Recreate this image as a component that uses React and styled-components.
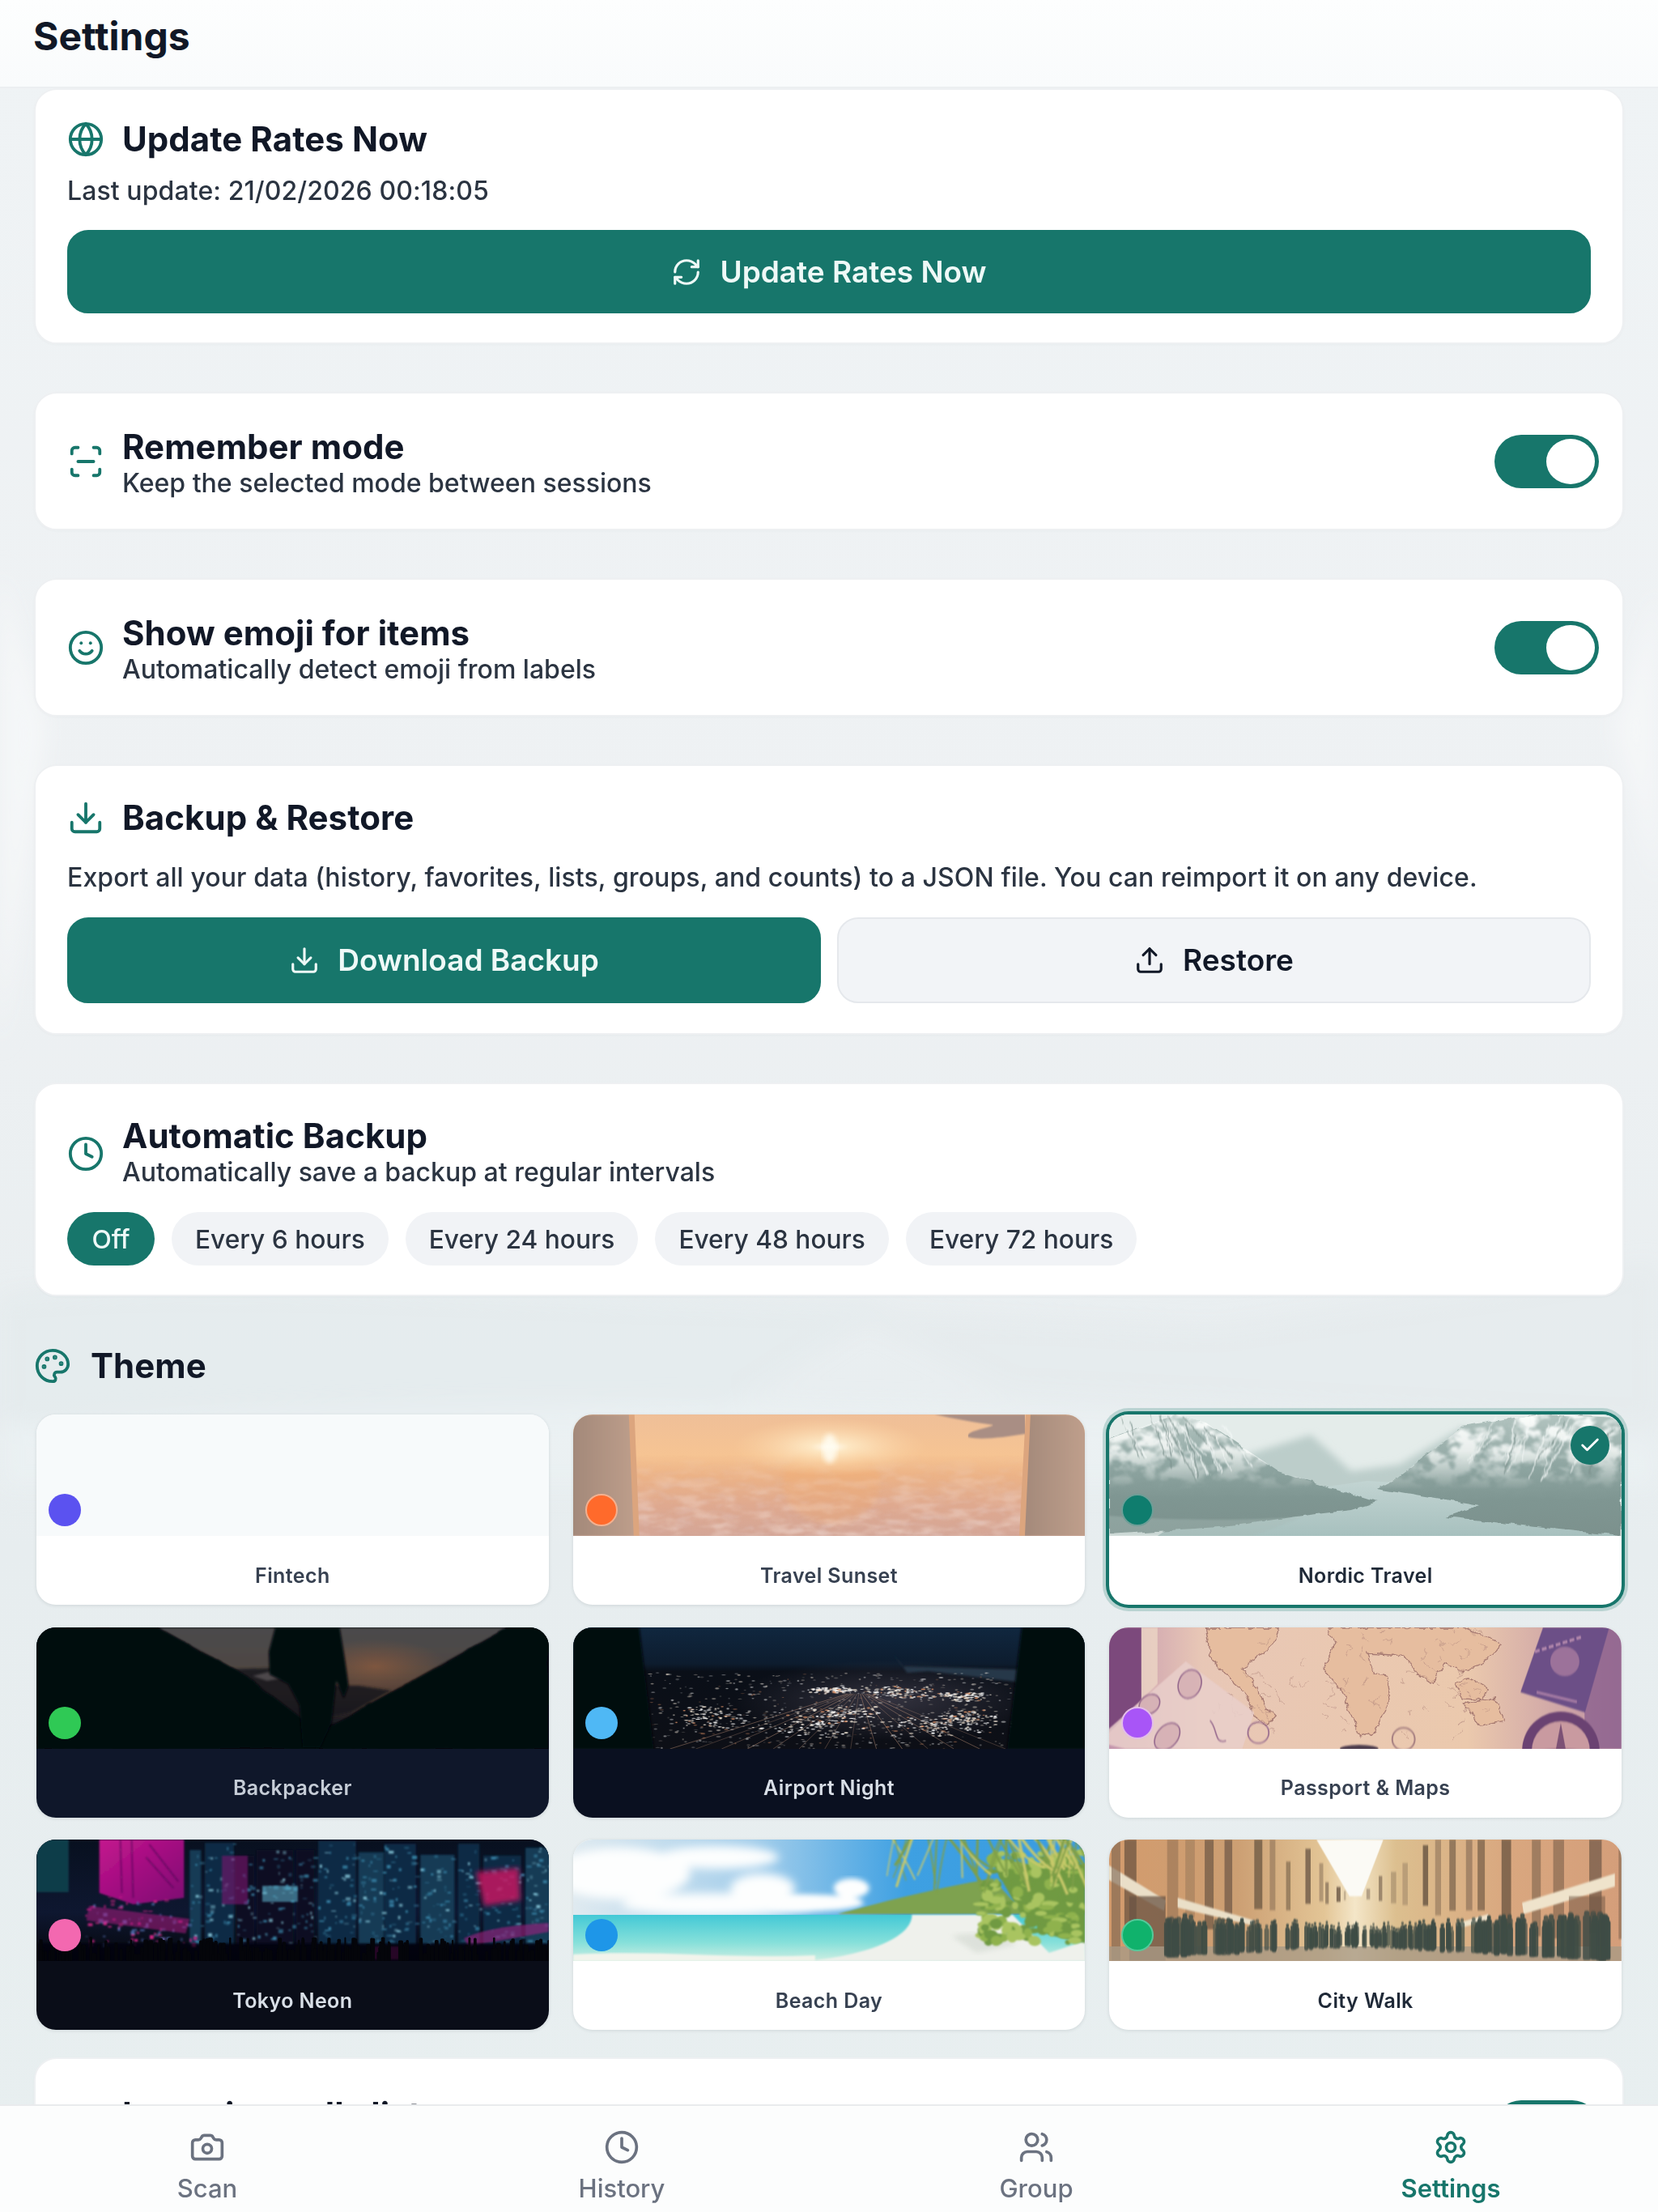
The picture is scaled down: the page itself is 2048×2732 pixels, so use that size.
import React from "react";
import styled, { createGlobalStyle } from "styled-components";
import { Camera, Clock, Users, Settings, Globe, RefreshCw, ScanLine, Smile, Download, Upload, Palette, Check } from "lucide-react";

const TEAL = "#17766b";

const Global = createGlobalStyle`
  html, body { margin: 0; padding: 0; background: #edf1f3; }
  * { box-sizing: border-box; }
  body { font-family: Inter, "Noto Sans", "Liberation Sans", sans-serif; color: #111827; }
`;

const Page = styled.div`
  position: relative; width: 2048px; height: 2732px; display: flex; flex-direction: column; overflow: hidden;
  background: linear-gradient(180deg, #eff3f5 0%, #eef1f3 40%, #e7edef 70%, #e8eff0 100%);
`;
const Backdrop = styled.svg`position: absolute; inset: 0; width: 100%; height: 100%; pointer-events: none;`;
const Header = styled.header`
  position: relative; z-index: 2; flex: 0 0 109px; display: flex; align-items: center; padding: 0 41px 17px;
  background: linear-gradient(180deg, #fdfefe, #f9fbfc); border-bottom: 2px solid #eceff1;
`;
const PageTitle = styled.h1`margin: 0; font-size: 48px; line-height: 54px; font-weight: 700; color: #111827;`;
const Content = styled.main`
  position: relative; z-index: 1; flex: 1; min-height: 0; overflow: hidden; padding: 0 42px;
  display: flex; flex-direction: column; gap: 59px;
`;
const Card = styled.section`
  flex: none; background: #fff; border: 2px solid #eef0f2; border-radius: 28px; padding: ${p => p.$pad};
  box-shadow: 0 1px 3px rgba(30,50,60,.03);
`;
const ToggleCard = styled(Card)`display: flex; align-items: center; gap: 22px; height: 171px;`;
const HeadRow = styled.div`display: flex; align-items: center; gap: 22px;`;
const IconWrap = styled.span`display: flex; flex: none; color: ${TEAL};`;
const TitleBlock = styled.div`flex: 1; min-width: 0; display: flex; flex-direction: column; gap: 3px; margin-top: ${p => p.$drop || 0}px;`;
const CardTitle = styled.h2`margin: 0; font-size: 42px; line-height: 44px; font-weight: 700; color: #111827; letter-spacing: 0.05px;`;
const CardSub = styled.p`margin: 0; min-height: 40px; font-size: 32px; line-height: 40px; font-weight: 500; color: #2b3441;`;
const Paragraph = styled.p`margin: ${p => p.$m}; font-size: 32px; line-height: 40px; font-weight: 500; letter-spacing: .09px; color: #2b3441; white-space: nowrap;`;
const Switch = styled.span`
  position: relative; flex: none; width: 129px; height: 66px; border-radius: 33px; background: ${TEAL};
  &::after { content: ""; position: absolute; top: 5px; right: 5px; width: 60px; height: 56px; border-radius: 50%; background: #fff; }
`;
const Btn = styled.button`
  flex: 1; display: flex; align-items: center; justify-content: center; gap: 22px; height: ${p => p.$h}px;
  border-radius: 26px; font: 600 37px/44px Inter, "Noto Sans", sans-serif; cursor: pointer;
  background: ${p => (p.$ghost ? "#f2f4f7" : TEAL)};
  color: ${p => (p.$ghost ? "#111827" : "#eef9f7")};
  border: 2px solid ${p => (p.$ghost ? "#e5e8ec" : TEAL)};
`;
const BtnRow = styled.div`display: flex; gap: 20px;`;
const ChipRow = styled.div`display: flex; gap: 21px; margin-top: 29px;`;
const Chip = styled.span`
  height: 66px; min-width: 108px; padding: 0 29px; border-radius: 33px; display: flex; align-items: center; justify-content: center; font-size: 31.7px; font-weight: 500;
  background: ${p => (p.$on ? TEAL : "#f1f3f6")}; color: ${p => (p.$on ? "#eef9f7" : "#2b3441")};
`;
const ThemeSection = styled.section`flex: none; margin-top: 5px; margin-bottom: -25px;`;
const ThemeHead = styled.div`display: flex; align-items: center; gap: 24px; height: 44px;`;
const ThemeGrid = styled.div`display: grid; grid-template-columns: repeat(3, 1fr); column-gap: 30px; row-gap: 27.5px; margin: 38px 3px 0;`;
const ThemeCard = styled.div`
  position: relative; height: 235px; border-radius: 24px; overflow: hidden; display: flex; flex-direction: column;
  background: ${p => p.$label};
  box-shadow: ${p => (p.$selected ? `0 0 0 4px ${TEAL}, 0 0 0 8px rgba(23,118,107,.22)` : "0 1px 4px rgba(30,50,60,.12)")};
`;
const Preview = styled.div`flex: 0 0 150px; background: ${p => p.$bg || "transparent"};`;
const Name = styled.div`flex: 1; display: flex; align-items: center; justify-content: center; padding-top: 12px; font-size: 25px; font-weight: 600; letter-spacing: .4px; color: ${p => p.$color};`;
const Dot = styled.span`
  position: absolute; left: 15px; top: 98px; width: 40px; height: 40px; border-radius: 50%; background: ${p => p.$c};
  border: 2px solid ${p => p.$ring || "transparent"};
`;
const Badge = styled.span`
  position: absolute; top: 14px; right: 15px; width: 48px; height: 48px; border-radius: 50%; background: ${TEAL};
  display: flex; align-items: center; justify-content: center; color: #fff;
`;
const Nav = styled.nav`
  position: relative; z-index: 2; flex: 0 0 133px; display: grid; grid-template-columns: repeat(4, 1fr);
  background: #fcfdfd; border-top: 2px solid #e9ebed;
`;
const NavItem = styled.div`
  display: flex; flex-direction: column; align-items: center; padding-top: 29px; gap: 10px;
  color: ${p => (p.$active ? TEAL : "#6b7280")}; font-size: 31px; line-height: 38px; font-weight: ${p => (p.$active ? 600 : 500)};
`;
const SceneSvg = styled.svg`display: block; width: 100%; height: 100%;`;

const rng = seed => { let s = seed; return () => (s = (s * 16807) % 2147483647) / 2147483647; };
const Soft = ({ id, d = 0.8 }) => <filter id={id} x="-10%" y="-10%" width="120%" height="120%"><feGaussianBlur stdDeviation={d} /></filter>;
const Rough = ({ id, f = 0.04, s = 10, d = 0.7, seed = 3 }) => (
  <filter id={id} x="-10%" y="-10%" width="120%" height="120%">
    <feTurbulence type="fractalNoise" baseFrequency={f} numOctaves="3" seed={seed} result="n" />
    <feDisplacementMap in="SourceGraphic" in2="n" scale={s} xChannelSelector="R" yChannelSelector="G" />
    <feGaussianBlur stdDeviation={d} />
  </filter>
);
const Noise = ({ id, f, seed, rgb, gain = 4, cut = 1.7, octaves = 4 }) => (
  <filter id={id} x="0" y="0" width="100%" height="100%">
    <feTurbulence type="fractalNoise" baseFrequency={f} numOctaves={octaves} seed={seed} />
    <feColorMatrix values={`0 0 0 0 ${rgb[0]} 0 0 0 0 ${rgb[1]} 0 0 0 0 ${rgb[2]} ${gain} 0 0 0 ${-cut}`} />
    <feGaussianBlur stdDeviation="1" />
  </filter>
);
const Scene = ({ children }) => <SceneSvg viewBox="0 0 635 150" preserveAspectRatio="none">{children}</SceneSvg>;

const Sunset = () => (
  <Scene>
    <defs>
      <linearGradient id="ss" x1="0" y1="0" x2="0" y2="1"><stop offset="0" stopColor="#efbf98" /><stop offset=".33" stopColor="#f6c493" /><stop offset=".5" stopColor="#ecb387" /><stop offset=".75" stopColor="#dfa98f" /><stop offset="1" stopColor="#d4a697" /></linearGradient>
      <radialGradient id="sg"><stop offset="0" stopColor="#fffdf4" /><stop offset=".2" stopColor="#fff0cf" stopOpacity=".8" /><stop offset="1" stopColor="#ffd9a8" stopOpacity="0" /></radialGradient>
      <linearGradient id="sc" x1="0" y1="0" x2="1" y2="0"><stop offset="0" stopColor="#a3897a" /><stop offset="1" stopColor="#bf9f8c" /></linearGradient>
      <linearGradient id="sf" x1="0" y1="0" x2="0" y2="1"><stop offset="0" stopColor="#000" /><stop offset=".3" stopColor="#777" /><stop offset="1" stopColor="#eee" /></linearGradient>
      <mask id="sm"><rect y="50" width="635" height="100" fill="url(#sf)" /></mask>
      <Noise id="sl" f=".03 .1" seed={5} rgb={[.91, .75, .68]} gain={3.4} cut={1.5} />
      <Noise id="sd" f=".04 .13" seed={14} rgb={[.76, .58, .56]} gain={3.4} cut={1.75} />
      <Soft id="sb" d="3" /><Soft id="sb2" d=".8" />
    </defs>
    <rect width="635" height="150" fill="url(#ss)" />
    <g mask="url(#sm)">
      <rect width="635" height="150" filter="url(#sl)" opacity=".5" />
      <rect width="635" height="150" filter="url(#sd)" opacity=".45" />
    </g>
    <ellipse cx="320" cy="85" rx="60" ry="50" fill="#f6a862" opacity=".22" filter="url(#sb)" />
    <ellipse cx="318" cy="40" rx="120" ry="36" fill="url(#sg)" />
    <ellipse cx="318" cy="42" rx="9" ry="18" fill="#fffdf2" opacity=".85" filter="url(#sb)" />
    <g filter="url(#sb2)">
      <path d="M0 0H72L80 150H0Z" fill="url(#sc)" /><path d="M69 0H76L82 150H75Z" fill="#dca57e" />
      <path d="M635 0H565L557 150H635Z" fill="url(#sc)" /><path d="M567 0H561L553 150H560Z" fill="#dca57e" />
      <path d="M448 0H560V24C535 28 505 32 490 28C486 20 512 18 521 13C500 10 470 5 448 0Z" fill="#a98e84" />
    </g>
  </Scene>
);

const Nordic = () => {
  const r = rng(23);
  const streaks = Array.from({ length: 46 }, (_, i) => {
    const left = i % 2 === 0;
    const x = left ? 15 + r() * 130 : 460 + r() * 170;
    const y = r() * 30;
    return { x, y, x2: x + (left ? 8 + r() * 30 : -8 - r() * 30), y2: y + 20 + r() * 45, w: .6 + r() * 1.6, c: r() > .4 ? "#f4f8f7" : "#7c918d" };
  });
  const leftM = "M0 30L82 0L120 10L210 70L332 108L300 118L240 125L150 138L0 148Z";
  const rightM = "M635 4L536 0L438 15L358 78L332 91L460 112L418 126L520 138L635 150Z";
  return <Scene>
    <defs>
      <linearGradient id="nm" x1="0" y1="0" x2="0" y2="1"><stop offset="0" stopColor="#b3c4c0" /><stop offset=".42" stopColor="#8ea5a1" /><stop offset=".7" stopColor="#7f9692" /><stop offset="1" stopColor="#7c918d" /></linearGradient>
      <linearGradient id="nl" x1="0" y1="0" x2="0" y2="1"><stop offset="0" stopColor="#c2d4d2" /><stop offset="1" stopColor="#a7c0be" /></linearGradient>
      <linearGradient id="nf" x1="0" y1="0" x2="0" y2="1"><stop offset="0" stopColor="#fff" /><stop offset=".3" stopColor="#ccc" /><stop offset=".62" stopColor="#000" /></linearGradient>
      <mask id="nk"><path d={`${leftM}${rightM}`} fill="url(#nf)" /></mask>
      <Noise id="nn" f=".035 .05" seed={9} rgb={[.96, .98, .97]} gain={5} cut={2} />
      <Rough id="nb" f={.05} s={7} d={.7} /><Rough id="nb3" f={.07} s={8} d={.8} seed={6} /><Soft id="nb2" d="5" /><Soft id="nb4" d="1.2" />
    </defs>
    <rect width="635" height="150" fill="#e4ecea" />
    <path d="M170 50L250 25L300 70L360 62L440 15L480 60V110H170Z" fill="#bccdca" filter="url(#nb2)" />
    <path d="M120 110L320 82L460 90L635 150H60Z" fill="url(#nl)" />
    <path d={leftM} fill="url(#nm)" filter="url(#nb)" />
    <path d={rightM} fill="url(#nm)" filter="url(#nb)" />
    <g mask="url(#nk)"><rect width="635" height="150" filter="url(#nn)" /></g>
    <g filter="url(#nb3)" fill="none" strokeLinecap="round">{streaks.map((s, i) => <line key={i} x1={s.x} y1={s.y} x2={s.x2} y2={s.y2} strokeWidth={s.w} stroke={s.c} opacity=".7" />)}</g>
    <path d="M0 125C60 130 170 132 240 126L180 150H0Z" fill="#a8bbb7" opacity=".4" filter="url(#nb4)" />
  </Scene>;
};

const Backpacker = () => <Scene>
  <defs>
    <linearGradient id="bs" x1="0" y1="0" x2="0" y2="1"><stop offset="0" stopColor="#4a494c" /><stop offset=".45" stopColor="#4f4642" /><stop offset=".7" stopColor="#523e34" /><stop offset="1" stopColor="#14161e" /></linearGradient>
    <radialGradient id="bo" cx=".5" cy=".5" r=".5"><stop offset="0" stopColor="#8d5b3e" stopOpacity=".75" /><stop offset="1" stopColor="#86573c" stopOpacity="0" /></radialGradient>
    <Rough id="bb" f={.03} s={6} d={1.3} />
    <Soft id="bc" d="1.5" />
  </defs>
  <rect width="635" height="150" fill="#06080e" />
  <path d="M150 0H585L440 80L370 120L330 115L268 65Z" fill="url(#bs)" filter="url(#bc)" />
  <ellipse cx="420" cy="48" rx="90" ry="34" fill="url(#bo)" />
  <path d="M225 52L300 50L328 72L400 72L440 78L390 105L340 115L290 100Z" fill="#15171f" opacity=".85" filter="url(#bc)" />
  <path d="M268 60L300 52L320 60L286 66Z" fill="#7b7476" opacity=".5" filter="url(#bc)" />
  <path d="M0 0H150L268 65L330 112L350 150H0Z" fill="#06090f" filter="url(#bb)" />
  <path d="M635 0H585L446 77L366 120L345 150H635Z" fill="#060910" filter="url(#bb)" />
  <path d="M296 0H376C380 24 384 46 387 72L381 88L372 66L366 118L352 148H330L326 96L312 70L289 58L288 30Z" fill="#05070c" filter="url(#bc)" />
</Scene>;

const Airport = () => {
  const r = rng(47);
  const clusters = [[320, 78, 40, 5], [400, 80, 60, 8], [480, 85, 50, 7], [300, 120, 90, 18], [450, 122, 70, 14], [170, 110, 50, 16], [340, 105, 60, 10], [490, 112, 40, 10]];
  const lights = [];
  for (let i = 0; i < 1400; i++) {
    let x, y, o;
    if (r() < .6) {
      const c = clusters[Math.floor(r() * clusters.length)];
      x = c[0] + (r() + r() - 1) * c[2]; y = c[1] + (r() + r() - 1) * c[3]; o = .45 + r() * .45;
    } else {
      y = 56 + r() * 94; x = 95 + r() * 450; o = .15 + r() * .35;
    }
    const t = r();
    lights.push({ x, y, w: .8 + r() * 2.2, h: .5 + r() * .7, o, f: t > .86 ? "#e89a6c" : t > .45 ? "#eadfcf" : "#ffffff" });
  }
  const roads = Array.from({ length: 14 }, (_, i) => ({ x: 120 + i * 32, y: 150, o: .25 + r() * .25 }));
  return <Scene>
    <defs>
      <linearGradient id="as" x1="0" y1="0" x2="0" y2="1"><stop offset="0" stopColor="#10273f" /><stop offset=".3" stopColor="#0d1c2e" /><stop offset=".36" stopColor="#0a0f18" /><stop offset="1" stopColor="#0d0f16" /></linearGradient>
      <radialGradient id="ah"><stop offset="0" stopColor="#6e6678" stopOpacity=".4" /><stop offset="1" stopColor="#6e6678" stopOpacity="0" /></radialGradient>
      <Soft id="ab" d=".7" /><Soft id="ab2" d="1.6" />
    </defs>
    <rect width="635" height="150" fill="url(#as)" />
    <ellipse cx="390" cy="90" rx="190" ry="50" fill="url(#ah)" />
    <path d="M396 32L408 48L556 52V68L440 54L414 56L406 44Z" fill="#28384a" filter="url(#ab2)" />
    <g stroke="#d2a184" strokeWidth="1" filter="url(#ab)">{roads.map((l, i) => <line key={i} x1={340 + i * 2} y1="82" x2={l.x} y2={l.y} opacity={l.o} />)}</g>
    <g filter="url(#ab)">{lights.map((l, i) => <ellipse key={i} cx={l.x} cy={l.y} rx={l.w} ry={l.h} fill={l.f} opacity={l.o} />)}</g>
    <path d="M0 0H82L100 150H0Z" fill="#05080e" filter="url(#ab2)" />
    <path d="M635 0H556L538 150H635Z" fill="#05080e" filter="url(#ab2)" />
  </Scene>;
};

const Passport = () => {
  const r = rng(211);
  const borders = Array.from({ length: 70 }, () => {
    const x = 130 + r() * 340, y = r() * 135;
    return `M${x} ${y}l${(r() - .5) * 24} ${(r() - .5) * 20}l${(r() - .5) * 20} ${(r() - .5) * 20}`;
  });
  return <Scene>
    <defs>
      <linearGradient id="pb" x1="0" y1="0" x2="1" y2="0"><stop offset="0" stopColor="#c496ae" /><stop offset=".18" stopColor="#e8c7b6" /><stop offset=".7" stopColor="#ebc9ad" /><stop offset="1" stopColor="#bd8fa3" /></linearGradient>
      <Rough id="pr" f={.09} s={9} d={.6} seed={8} />
      <Soft id="pf" d=".8" />
    </defs>
    <rect width="635" height="150" fill="url(#pb)" />
    <path d="M0 0H40V90L0 130Z" fill="#7b4a7c" filter="url(#pf)" />
    <path d="M40 0H60V70L40 90Z" fill="#f0dcc8" opacity=".7" filter="url(#pf)" />
    <g filter="url(#pr)" fill="#e6bd9f" stroke="#a67a72" strokeWidth="1.3">
      <path d="M120 0L210 0L205 20L180 40L165 50L180 68L195 100L205 110L195 122L180 110L172 85L150 65L125 35Z" />
      <path d="M270 0H440L485 20L470 40L440 55L415 45L400 70L385 60L365 35L320 32L330 58L345 60L350 85L330 128L312 135L300 105L290 80L265 50L280 20Z" />
      <path d="M440 95L478 88L490 115L460 120Z" />
      <path d="M430 70L445 62L470 75L462 90L440 88Z" />
    </g>
    <g filter="url(#pr)" stroke="#b48a80" strokeWidth=".8" fill="none" opacity=".7">{borders.map((d, i) => <path key={i} d={d} />)}</g>
    <path d="M40 90L95 42L180 105L165 150H20L0 145V125Z" fill="#e9cfcb" opacity=".85" filter="url(#pf)" />
    <g filter="url(#pf)" fill="#c79aa6" stroke="#94678c" strokeWidth="1.6" fillOpacity=".5">
      <ellipse cx="50" cy="95" rx="14" ry="11" transform="rotate(-40 50 95)" />
      <ellipse cx="72" cy="135" rx="19" ry="13" transform="rotate(-50 72 135)" />
      <ellipse cx="100" cy="70" rx="14" ry="18" transform="rotate(20 100 70)" />
      <circle cx="185" cy="130" r="13" fill="none" />
      <path d="M125 115C135 125 130 145 145 140" fill="none" />
    </g>
    <g filter="url(#pf)">
      <path d="M588 0H635V150H590Z" fill="#835a8a" opacity=".7" />
      <path d="M538 0H620L590 105L510 80Z" fill="#6c4f87" />
      <circle cx="565" cy="42" r="18" fill="#b081a2" opacity=".7" />
      <path d="M528 30L585 12" stroke="#b98db0" strokeWidth="3" strokeDasharray="6 3" />
      <path d="M530 80L580 92" stroke="#a67ca4" strokeWidth="3" />
      <circle cx="560" cy="152" r="48" fill="#6a4372" />
      <circle cx="560" cy="152" r="36" fill="#c99aa0" />
      <path d="M560 118L566 150L595 152L566 156L560 186L554 156L525 152L554 150Z" fill="#7c5175" />
      <ellipse cx="310" cy="150" rx="24" ry="5" fill="#4e3c4e" />
      <circle cx="365" cy="138" r="14" fill="none" stroke="#a57e80" strokeWidth="2" />
    </g>
  </Scene>;
};

const Tokyo = () => {
  const r = rng(71);
  const blocks = [];
  let bx = 190;
  while (bx < 635) {
    const w = 14 + r() * 40;
    const gapDark = r() > .6;
    blocks.push({ x: bx, w, top: r() * 20, f: gapDark ? "#081020" : r() > .5 ? "#123a55" : "#0e2a44" });
    bx += w + r() * 6;
  }
  const lights = [];
  blocks.forEach(b => {
    const n = Math.floor(b.w * 1.1);
    for (let i = 0; i < n; i++) {
      lights.push({ x: b.x + r() * b.w, y: b.top + r() * (128 - b.top), w: 1.5 + r() * 5, h: 1 + r() * 3.5, f: r() > .28 ? "#3c8cb0" : "#8dd0e2", o: .25 + r() * .6 });
    }
  });
  const left = Array.from({ length: 90 }, () => ({ x: 60 + r() * 135, y: 70 + r() * 60, w: 1.5 + r() * 5, h: 1 + r() * 4, f: r() > .4 ? "#e0248c" : "#5a78c0", o: .35 + r() * .6 }));
  const crowd = Array.from({ length: 220 }, () => ({ x: r() * 635, w: 2 + r() * 4, h: 8 + r() * 22 }));
  return <Scene>
    <defs>
      <linearGradient id="tn" x1="0" y1="0" x2="0" y2="1"><stop offset="0" stopColor="#08101f" /><stop offset=".6" stopColor="#0e1730" /><stop offset="1" stopColor="#05060b" /></linearGradient>
      <linearGradient id="ts" x1="0" y1="0" x2="1" y2="1"><stop offset="0" stopColor="#c4148e" /><stop offset="1" stopColor="#7d0c72" /></linearGradient>
      <Soft id="tb" d="1" /><Soft id="tb2" d="3" />
    </defs>
    <rect width="635" height="150" fill="url(#tn)" />
    <path d="M0 0H40V65H0Z" fill="#0d3d4a" filter="url(#tb)" />
    <g filter="url(#tb)">{blocks.map((b, i) => <rect key={i} x={b.x} y={b.top} width={b.w} height={130 - b.top} fill={b.f} />)}</g>
    <g filter="url(#tb)">{lights.map((l, i) => <rect key={i} x={l.x} y={l.y} width={l.w} height={l.h} fill={l.f} opacity={l.o} />)}</g>
    <path d="M78 0H183V72L120 80L78 66Z" fill="url(#ts)" filter="url(#tb)" />
    <g stroke="#4c0a55" strokeWidth="1.5" filter="url(#tb)" opacity=".7"><path d="M104 0L106 66M118 0L120 72M140 6L176 52M136 22L170 60" /></g>
    <path d="M230 20H262V80H230Z" fill="#7b1470" opacity=".6" filter="url(#tb)" />
    <g filter="url(#tb)">{left.map((b, i) => <rect key={i} x={b.x} y={b.y} width={b.w} height={b.h} fill={b.f} opacity={b.o} />)}</g>
    <path d="M65 82L190 98L185 116L62 100Z" fill="#c91c90" opacity=".45" filter="url(#tb)" />
    <path d="M545 40L598 35L600 75L555 82Z" fill="#d11464" opacity=".8" filter="url(#tb2)" />
    <path d="M530 122C550 112 590 105 635 103V114L535 132Z" fill="#a12080" opacity=".6" filter="url(#tb)" />
    <rect x="280" y="57" width="44" height="20" fill="#5aa9c3" opacity=".6" filter="url(#tb)" />
    <rect x="418" y="132" width="34" height="16" fill="#b81a85" opacity=".7" filter="url(#tb)" />
    <rect y="128" width="635" height="22" fill="#05060b" opacity=".7" filter="url(#tb)" />
    <g fill="#04050a">{crowd.map((c, i) => <rect key={i} x={c.x} y={150 - c.h} width={c.w} height={c.h} rx="1.5" />)}</g>
  </Scene>;
};

const Beach = () => {
  const r = rng(97);
  const fronds = Array.from({ length: 46 }, () => {
    const x = 395 + r() * 235, dx = (r() - .35) * 70;
    return { d: `M${x} -2Q${x + dx * .5} ${15 + r() * 15} ${x + dx} ${30 + r() * 40}`, c: r() > .5 ? "#c9c96a" : "#7f9f48", w: 1.2 + r() * 2.4 };
  });
  const bush = Array.from({ length: 170 }, () => ({ x: 505 + r() * 130, y: 15 + r() * 112, rx: 3 + r() * 7, ry: 2 + r() * 6, c: ["#8fb24e", "#6f9a42", "#a9c460"][Math.floor(r() * 3)] }));
  return <Scene>
    <defs>
      <linearGradient id="bsk" x1="0" y1="0" x2="1" y2="0"><stop offset="0" stopColor="#dfeaf0" /><stop offset=".35" stopColor="#a6cfeb" /><stop offset=".65" stopColor="#3ea0e2" /><stop offset="1" stopColor="#3a9ce0" /></linearGradient>
      <linearGradient id="bse" x1="0" y1="0" x2="0" y2="1"><stop offset="0" stopColor="#43c9d6" /><stop offset=".6" stopColor="#86e0da" /><stop offset="1" stopColor="#cdeee2" /></linearGradient>
      <Soft id="bh" d="1.1" /><Soft id="bh2" d="6" /><Soft id="bh3" d="3" />
    </defs>
    <rect width="635" height="95" fill="url(#bsk)" />
    <g fill="#fdfefe" filter="url(#bh2)">
      <ellipse cx="60" cy="42" rx="85" ry="32" /><ellipse cx="180" cy="22" rx="75" ry="14" /><ellipse cx="235" cy="60" rx="40" ry="18" /><ellipse cx="180" cy="80" rx="120" ry="14" />
    </g>
    <g fill="#fdfefe" filter="url(#bh3)"><ellipse cx="345" cy="60" rx="22" ry="12" /><ellipse cx="300" cy="78" rx="60" ry="10" /></g>
    <rect y="93" width="635" height="57" fill="url(#bse)" />
    <path d="M328 92C380 78 440 62 520 48L560 92Z" fill="#7ea24f" filter="url(#bh)" />
    <path d="M420 93H545L590 140L635 125V150H290C350 145 420 125 420 93Z" fill="#eff1ec" filter="url(#bh)" />
    <path d="M470 120C490 112 530 118 550 130L500 140Z" fill="#d6dbd4" opacity=".7" filter="url(#bh3)" />
    <path d="M520 30H635V128L590 118L555 92Z" fill="#6f9a42" filter="url(#bh)" />
    <g filter="url(#bh)">{bush.map((b, i) => <ellipse key={i} cx={b.x} cy={b.y} rx={b.rx} ry={b.ry} fill={b.c} />)}</g>
    <g fill="none" filter="url(#bh)">{fronds.map((f, i) => <path key={i} d={f.d} stroke={f.c} strokeWidth={f.w} />)}</g>
    <path d="M0 142C100 136 200 148 300 143V150H0Z" fill="#f2f4ec" filter="url(#bh)" />
  </Scene>;
};

const CityWalk = () => {
  const r = rng(131);
  const vx = 305, vy = 72;
  const strips = [];
  for (const side of [-1, 1]) {
    let d = 14;
    while (d < 340) {
      const w = 2 + d * .04 + r() * 3;
      const x = vx + side * d;
      const top = Math.max(0, vy - d * (.5 + r() * .5));
      const bot = vy + d * (.1 + r() * .12);
      if (x > -10 && x < 645) strips.push({ x, top, h: bot - top, w, o: .25 + r() * .5 });
      d += w * (1.8 + r() * 2.2);
    }
  }
  const people = Array.from({ length: 210 }, () => {
    const u = r() * 2 - 1;
    const x = vx + Math.sign(u) * Math.pow(Math.abs(u), 1.15) * 320;
    const d = Math.abs(x - vx) / 320;
    const h = 14 + d * 34 + r() * 12;
    return { x, h, w: 3.5 + d * 7, b: 130 + d * 18 + r() * 4, o: .7 + r() * .3 };
  }).filter(p => p.x > 68 && p.x < 628);
  return <Scene>
    <defs>
      <linearGradient id="cw" x1="0" y1="0" x2="1" y2="0">
        <stop offset="0" stopColor="#d39b6d" /><stop offset=".25" stopColor="#cc9f73" /><stop offset=".42" stopColor="#e3c596" /><stop offset=".48" stopColor="#f4e6c8" /><stop offset=".56" stopColor="#dcbf8f" /><stop offset=".78" stopColor="#d9a77f" /><stop offset="1" stopColor="#d49e7a" />
      </linearGradient>
      <Soft id="cb" d=".8" />
    </defs>
    <rect width="635" height="150" fill="url(#cw)" />
    <path d="M257 0H340L313 70H298Z" fill="#fbfaf5" filter="url(#cb)" />
    <g fill="#5c4a3b" filter="url(#cb)">{strips.map((s, i) => <rect key={i} x={s.x} y={s.top} width={s.w} height={s.h} opacity={s.o} />)}</g>
    <path d="M0 32L70 75L68 88L0 50Z" fill="#eadfc8" filter="url(#cb)" />
    <path d="M85 72L180 100L178 106L85 84Z" fill="#eadfc8" filter="url(#cb)" />
    <path d="M627 42L512 78L514 92L627 58Z" fill="#efe3cb" filter="url(#cb)" />
    <path d="M470 92L430 104L432 110L470 100Z" fill="#efe3cb" filter="url(#cb)" />
    <path d="M3 0H14V150H3Z" fill="#7a6350" opacity=".6" filter="url(#cb)" />
    <path d="M25 70H70V150H25Z" fill="#6b5545" opacity=".75" filter="url(#cb)" />
    <path d="M570 70H615V150H570Z" fill="#6e5442" opacity=".5" filter="url(#cb)" />
    <rect y="132" width="635" height="18" fill="#a99a84" opacity=".8" />
    <g fill="#3f4c45" filter="url(#cb)">{people.map((p, i) => <g key={i} opacity={p.o}><rect x={p.x} y={p.b - p.h} width={p.w} height={p.h} rx="2.5" /><circle cx={p.x + p.w / 2} cy={p.b - p.h - 2} r={p.w * .36} /></g>)}</g>
  </Scene>;
};

const themes = [
  { n: "Fintech", c: "#5b52f0", label: "#ffffff", text: "#374151", bg: "#f7fafb" },
  { n: "Travel Sunset", c: "#ff6a2b", ring: "#f3b08f", label: "#ffffff", text: "#374151", S: Sunset },
  { n: "Nordic Travel", c: "#0f7d6e", ring: "#6e9e97", label: "#ffffff", text: "#1f2937", S: Nordic, selected: true },
  { n: "Backpacker", c: "#2fc955", label: "#0f172a", text: "#c5ccd6", S: Backpacker },
  { n: "Airport Night", c: "#4fb8f5", label: "#0a1020", text: "#d9dfe7", S: Airport },
  { n: "Passport & Maps", c: "#a855f7", ring: "#e3bde8", label: "#ffffff", text: "#374151", S: Passport },
  { n: "Tokyo Neon", c: "#f368b0", label: "#0a0d18", text: "#d9dfe7", S: Tokyo },
  { n: "Beach Day", c: "#1e96e8", label: "#ffffff", text: "#374151", S: Beach },
  { n: "City Walk", c: "#10b26c", ring: "#55c99a", label: "#ffffff", text: "#1f2937", S: CityWalk },
];

const chips = ["Off", "Every 6 hours", "Every 24 hours", "Every 48 hours", "Every 72 hours"];

const tabs = [
  { label: "Scan", I: Camera },
  { label: "History", I: Clock },
  { label: "Group", I: Users },
  { label: "Settings", I: Settings, active: true },
];

const BackdropArt = () => (
  <Backdrop viewBox="0 0 2048 2732" preserveAspectRatio="none">
    <defs><filter id="bgb"><feGaussianBlur stdDeviation="14" /></filter></defs>
    <g filter="url(#bgb)">
      <path d="M0 700L60 900L0 1300Z" fill="#f6f8f9" opacity=".8" />
      <path d="M2048 720L1990 900L2048 1100Z" fill="#f6f8f9" opacity=".7" />
      <path d="M0 1600C300 1570 700 1610 1100 1610L900 1740L0 1760Z" fill="#e2e9eb" opacity=".5" />
      <path d="M2048 1560L1500 1640L1050 1620L1250 1720L2048 1760Z" fill="#e3e9ec" opacity=".5" />
      <path d="M0 1760C500 1710 1300 1730 2048 1780V1840H0Z" fill="#eef3f5" opacity=".5" />
    </g>
  </Backdrop>
);

export default function App() {
  return (
    <Page>
      <Global />
      <BackdropArt />
      <Header><PageTitle>Settings</PageTitle></Header>
      <Content>
        <Card $pad="38px 39px 36px">
          <HeadRow>
            <IconWrap><Globe size={46} /></IconWrap>
            <CardTitle>Update Rates Now</CardTitle>
          </HeadRow>
          <Paragraph $m="21px 0 28px">Last update: 21/02/2026 00:18:05</Paragraph>
          <BtnRow>
            <Btn $h={103}><RefreshCw size={38} />Update Rates Now</Btn>
          </BtnRow>
        </Card>
        <ToggleCard $pad="0 29px 0 39px">
          <IconWrap><ScanLine size={46} /></IconWrap>
          <TitleBlock $drop={7}>
            <CardTitle>Remember mode</CardTitle>
            <CardSub>Keep the selected mode between sessions</CardSub>
          </TitleBlock>
          <Switch />
        </ToggleCard>
        <ToggleCard $pad="0 29px 0 39px">
          <IconWrap><Smile size={46} /></IconWrap>
          <TitleBlock $drop={7}>
            <CardTitle>Show emoji for items</CardTitle>
            <CardSub>Automatically detect emoji from labels</CardSub>
          </TitleBlock>
          <Switch />
        </ToggleCard>
        <Card $pad="41px 39px 37px">
          <HeadRow>
            <IconWrap><Download size={46} /></IconWrap>
            <CardTitle>Backup &amp; Restore</CardTitle>
          </HeadRow>
          <Paragraph $m="31px 0 29px">Export all your data (history, favorites, lists, groups, and counts) to a JSON file. You can reimport it on any device.</Paragraph>
          <BtnRow>
            <Btn $h={106}><Download size={38} />Download Backup</Btn>
            <Btn $h={106} $ghost><Upload size={38} />Restore</Btn>
          </BtnRow>
        </Card>
        <Card $pad="42px 39px 36px">
          <HeadRow>
            <IconWrap><Clock size={46} /></IconWrap>
            <TitleBlock>
              <CardTitle>Automatic Backup</CardTitle>
              <CardSub>Automatically save a backup at regular intervals</CardSub>
            </TitleBlock>
          </HeadRow>
          <ChipRow>{chips.map((c, i) => <Chip key={c} $on={i === 0}>{c}</Chip>)}</ChipRow>
        </Card>
        <ThemeSection>
          <ThemeHead>
            <IconWrap><Palette size={46} /></IconWrap>
            <CardTitle>Theme</CardTitle>
          </ThemeHead>
          <ThemeGrid>
            {themes.map(t => (
              <ThemeCard key={t.n} $label={t.label} $selected={t.selected}>
                <Preview $bg={t.bg}>{t.S && <t.S />}</Preview>
                <Name $color={t.text}>{t.n}</Name>
                <Dot $c={t.c} $ring={t.ring} />
                {t.selected && <Badge><Check size={28} strokeWidth={2.4} /></Badge>}
              </ThemeCard>
            ))}
          </ThemeGrid>
        </ThemeSection>
        <ToggleCard $pad="0 29px 0 39px">
          <IconWrap><ScanLine size={46} /></IconWrap>
          <TitleBlock $drop={13}>
            <CardTitle>Incoming calls list</CardTitle>
            <CardSub>&nbsp;</CardSub>
          </TitleBlock>
          <Switch />
        </ToggleCard>
      </Content>
      <Nav>
        {tabs.map(({ label, I, active }) => (
          <NavItem key={label} $active={active}><I size={44} />{label}</NavItem>
        ))}
      </Nav>
    </Page>
  );
}
